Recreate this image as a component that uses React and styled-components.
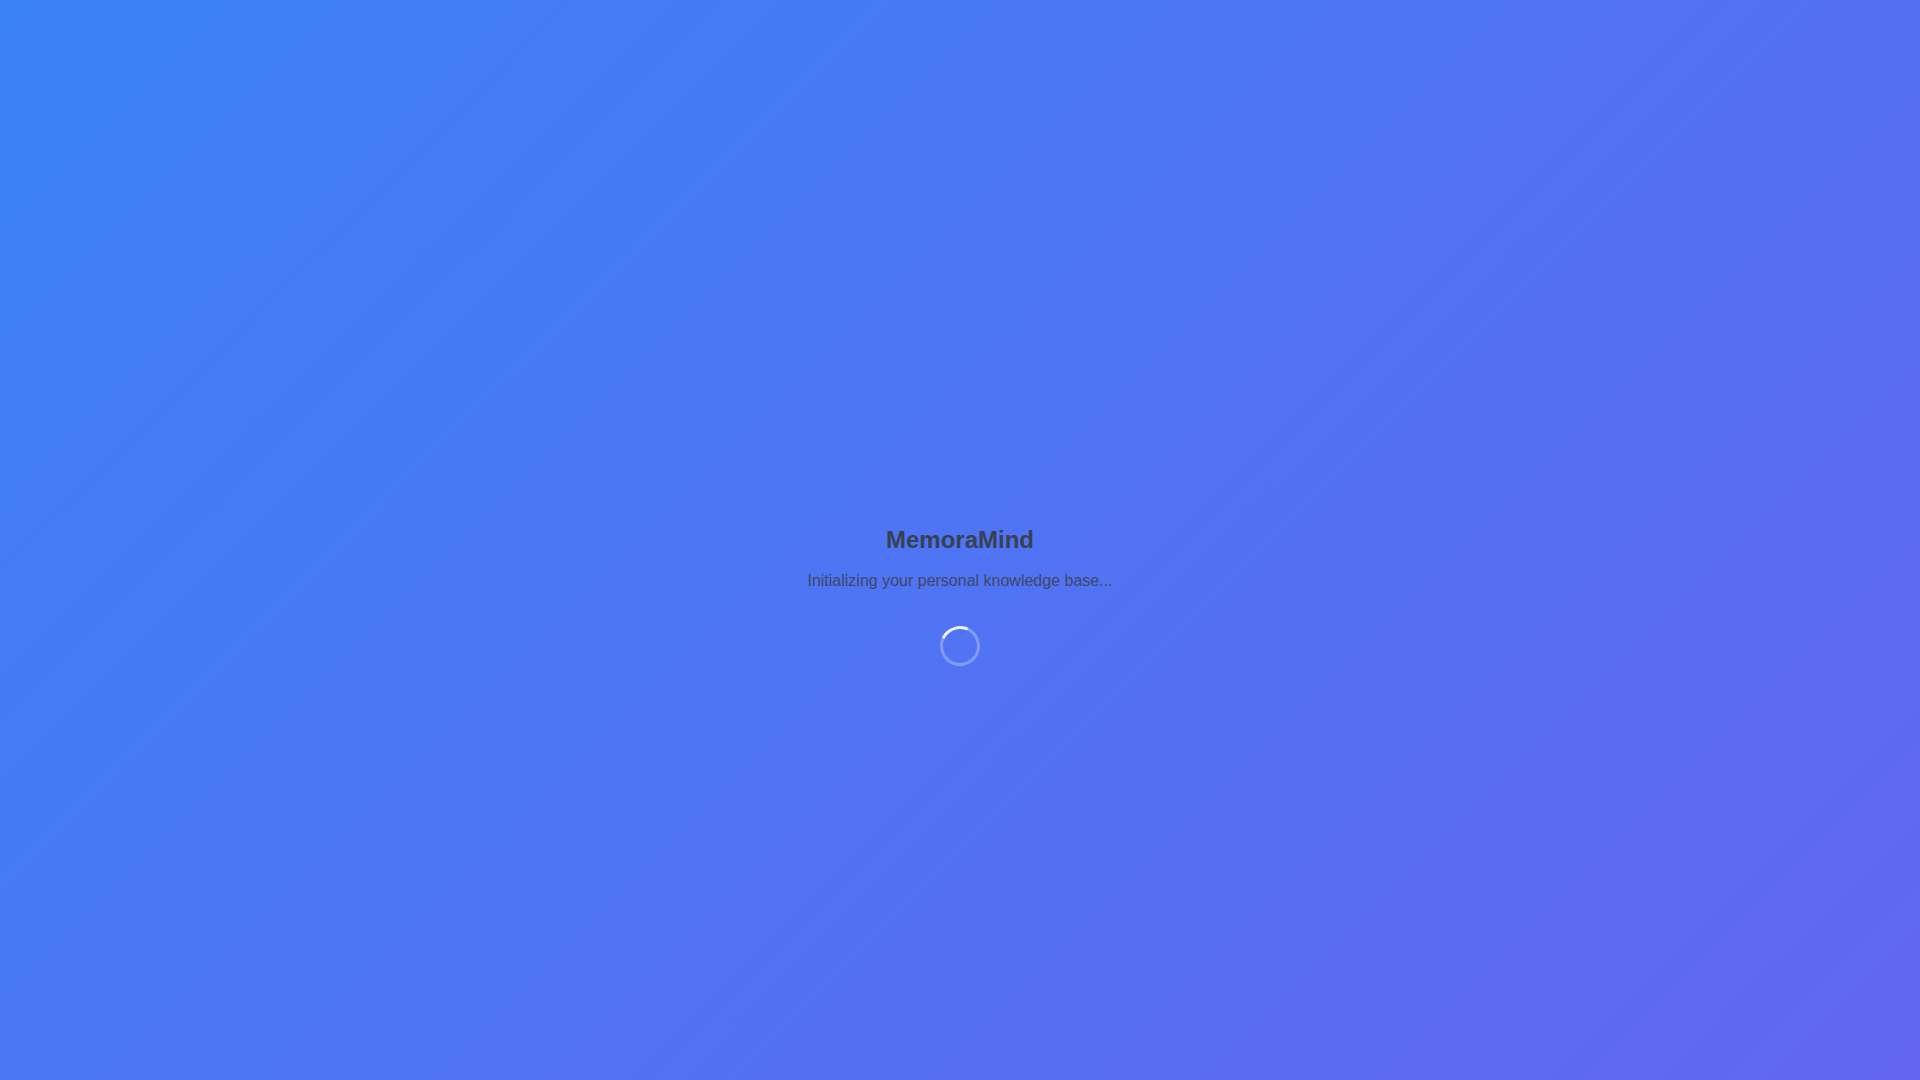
import React from 'react'
import styled, { createGlobalStyle, keyframes } from 'styled-components'

const GlobalStyle = createGlobalStyle`
  html, body {
    margin: 0;
    padding: 0;
  }
  body {
    font-family: "Liberation Sans", Arial, sans-serif;
  }
`

const spin = keyframes`
  from { transform: rotate(-20deg); }
  to { transform: rotate(340deg); }
`

const Screen = styled.div`
  width: 100%;
  min-height: 100vh;
  display: flex;
  align-items: center;
  justify-content: center;
  background: linear-gradient(135deg, #3b82f6 0%, #6366f1 100%);
`

const Loader = styled.div`
  display: flex;
  flex-direction: column;
  align-items: center;
  text-align: center;
`

// logo slot is reserved but empty while loading
const LogoSlot = styled.div`
  width: 80px;
  height: 80px;
  margin-bottom: 29px;
  visibility: hidden;
`

const Title = styled.h1`
  margin: 0 0 13px;
  font-size: 24px;
  line-height: 32px;
  font-weight: 700;
  color: #374151;
`

const Subtitle = styled.p`
  margin: 0 0 33px;
  font-size: 16px;
  line-height: 24px;
  color: #3f4866;
`

const Spinner = styled.div`
  width: 40px;
  height: 40px;
  box-sizing: border-box;
  border-radius: 50%;
  border: 3px solid rgba(255, 255, 255, 0.3);
  border-top-color: rgba(255, 255, 255, 0.9);
  transform: rotate(-20deg);
  animation: ${spin} 1s linear infinite;
`

function App() {
  return (
    <React.Fragment>
      <GlobalStyle />
      <Screen>
        <Loader>
          <LogoSlot />
          <Title>MemoraMind</Title>
          <Subtitle>Initializing your personal knowledge base...</Subtitle>
          <Spinner />
        </Loader>
      </Screen>
    </React.Fragment>
  )
}

export default App
